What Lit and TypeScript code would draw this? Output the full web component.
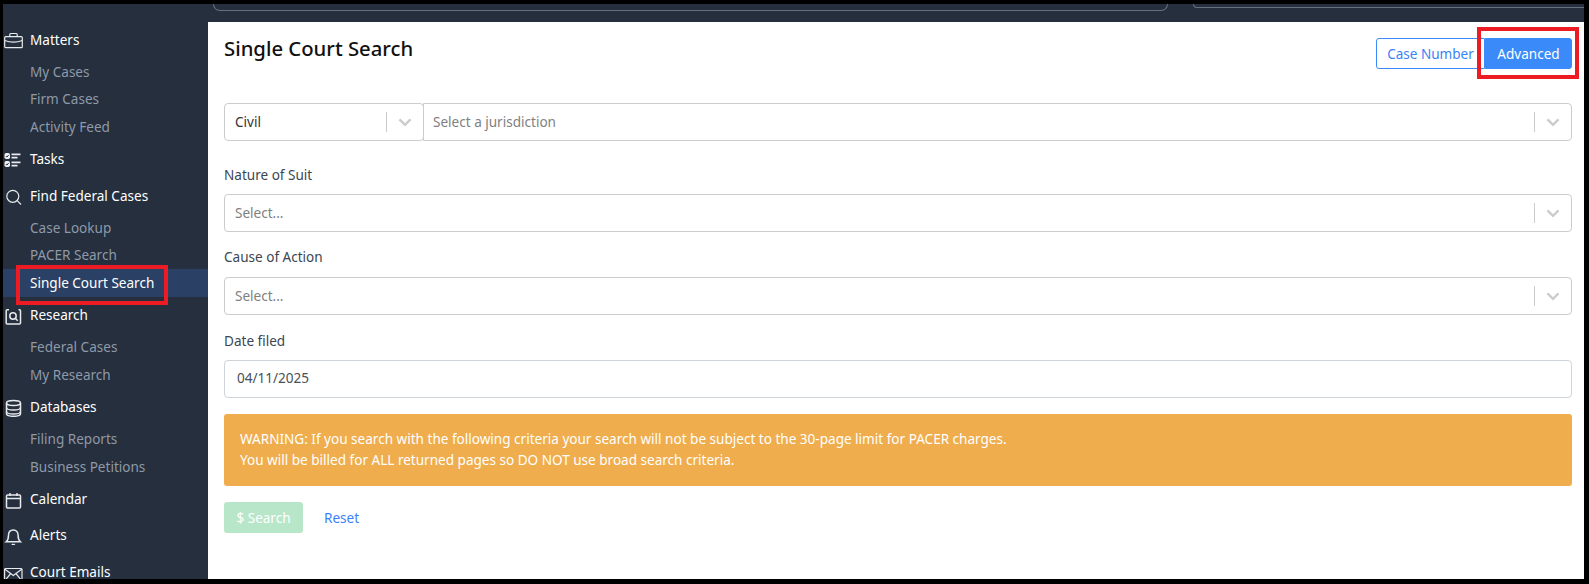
import { LitElement, html, css, svg } from "lit";
import { customElement } from "lit/decorators.js";

const icons: Record<string, unknown> = {
  matters: svg`<rect x="0.7" y="6.700" width="17.600" height="11" rx="1"/><path d="M5.800 6.700V4.500a1 1 0 0 1 1-1h5.400a1 1 0 0 1 1 1v2.200"/><path d="M.7 10.500c3 1.200 5.500 1.700 8.800 1.700s5.800-.5 8.800-1.700"/>`,
  tasks: svg`<rect class="solid" x="0.500" y="4" width="5.500" height="6" rx="1.800"/><rect class="solid" x="0.500" y="12" width="5.500" height="6" rx="1.800"/><path class="tick" d="M1.800 7l1.100 1.100 1.800-2.200M1.800 15l1.100 1.100 1.800-2.200"/><path class="bar" d="M7.500 5.300h9M7.500 8.600h6M7.500 13.300h9M7.500 16.600h6"/>`,
  search: svg`<circle cx="8.800" cy="10.300" r="6"/><path d="M13.200 14.700l3.800 3.800"/>`,
  research: svg`<path class="b" d="M5 4.700H3.200a1 1 0 0 0-1 1V18a1 1 0 0 0 1 1H15.500a1 1 0 0 0 1-1V5.700a1 1 0 0 0-1-1h-1"/><circle class="b" cx="9" cy="11" r="3.200"/><path class="b" d="M11.300 13.300l2.400 2.400"/>`,
  databases: svg`<g class="b"><ellipse cx="9.500" cy="6" rx="7" ry="2.500"/><path d="M2.500 6v10.800c0 1.500 3.100 2.500 7 2.500s7-1 7-2.500V6"/><path d="M2.500 10.500c0 1.500 3.100 2.500 7 2.500s7-1 7-2.500M2.500 14.500c0 1.500 3.100 2.500 7 2.500s7-1 7-2.500" stroke-width="1.300"/></g>`,
  calendar: svg`<rect class="b" x="2.500" y="6" width="14" height="13" rx="1"/><path class="b" d="M2.500 9.500h14"/><path class="b" d="M6 4v3M13 4v3"/>`,
  alerts: svg`<path class="b" d="M9.300 5c-3 0-4.800 2.100-4.800 5.300 0 4-1 5.400-2.300 6.500h14.200c-1.300-1.100-2.300-2.500-2.300-6.500 0-3.200-1.800-5.300-4.800-5.300z"/><path class="b" d="M7.800 19.200c.6.500 2.400.5 3 0"/>`,
  mail: svg`<rect x="0.600" y="6.500" width="17.400" height="13" rx="1"/><path d="M.6 7l8.700 6.500L18 7M.6 19l6.500-8M18 19l-6.500-8"/>`,
};

const nav = [
  { label: "Matters", icon: "matters", children: ["My Cases", "Firm Cases", "Activity Feed"] },
  { label: "Tasks", icon: "tasks", children: [] },
  { label: "Find Federal Cases", icon: "search", children: ["Case Lookup", "PACER Search", "Single Court Search"] },
  { label: "Research", icon: "research", children: ["Federal Cases", "My Research"] },
  { label: "Databases", icon: "databases", children: ["Filing Reports", "Business Petitions"] },
  { label: "Calendar", icon: "calendar", children: [] },
  { label: "Alerts", icon: "alerts", children: [] },
  { label: "Court Emails", icon: "mail", children: [] },
];

const chevron = html`<svg class="chev" viewBox="0 0 20 20"><path d="M4.500 7.300l5.500 5.500 5.500-5.500" fill="none" stroke="currentColor" stroke-width="2.400"/></svg>`;

@customElement("app-root")
export class AppRoot extends LitElement {
  static styles = css`
    :host { display: block; font-family: "Noto Sans", sans-serif; font-size: 13.560px; }
    * { box-sizing: border-box; }
    .frame { position: relative; width: 1589px; height: 584px; background: #000; padding: 4px 5px 5px 3px; display: flex; flex-direction: column; }
    .shell { flex: 1; background: #252f3e; display: flex; flex-direction: column; overflow: hidden; min-height: 0; }
    .top { height: 18px; flex: none; display: flex; padding-left: 210px; gap: 25px; }
    .pill { border: 1px solid #66717f; border-top: 0; }
    .pill.a { width: 955px; height: 7px; border-radius: 0 0 14px 14px; }
    .pill.b { flex: 1; height: 4px; border-right: 0; border-radius: 0 0 0 10px; }
    .body { flex: 1; display: flex; min-height: 0; }
    .side { width: 205px; flex: none; color: #fff; overflow: hidden; padding-top: 0; }
    .side-in { margin-top: -0.600px; }
    .head { height: 36.600px; display: flex; align-items: center; gap: 6px; padding-left: 1px; color: #fff; }
    .head svg { width: 20px; height: 20px; flex: none; fill: none; stroke: #e8eaed; stroke-width: 1.200; overflow: hidden; }
    .head svg .b { stroke-width: 1.500; }
    .head svg .solid { fill: #f1f2f4; stroke: none; }
    .head svg .tick { stroke: #252f3e; stroke-width: 1; }
    .head svg .bar { stroke-width: 1.800; }
    .sub { height: 27.600px; padding-left: 27px; display: flex; align-items: center; color: #8f99a8; }
    .sub.on { color: #fff; background: #2a4165; }
    .main { flex: 1; background: #fff; padding: 16px 12px 0 16px; color: #333; min-width: 0; }
    .title-row { display: flex; justify-content: space-between; }
    h1 { margin: -4px 0 0; font-size: 20.300px; font-weight: 500; line-height: 28px; color: #111; }
    .btns { display: flex; }
    .btn { height: 31px; display: flex; align-items: center; justify-content: center; border: 1px solid #3b8afa; color: #3b82f6; }
    .btn.l { width: 109px; border-radius: 3px 0 0 3px; }
    .btn.r { width: 87px; background: #3b8afa; color: #fff; border-radius: 0 3px 3px 0; }
    .row { display: flex; margin-top: 34px; }
    .sel { height: 38px; border: 1px solid #cccccc; border-radius: 4px; display: flex; align-items: center; padding-left: 10px; color: #808080; background: #fff; }
    .sel .txt { flex: 1; padding-bottom: 1px; }
    .sel .sep { width: 1px; height: 20px; background: #ccc; }
    .chev { width: 20px; height: 20px; color: #ccc; margin: 0 8px; flex: none; }
    .sel.type { width: 200px; flex: none; color: #333; }
    .sel.jur { flex: 1; margin-left: -1px; border-radius: 0 4px 4px 0; padding-left: 9px; }
    label { display: block; height: 20px; line-height: 19px; color: #3c4652; }
    .f1 { margin-top: 25px; }
    .f2 { margin-top: 16px; }
    .f3 { margin-top: 16.500px; }
    .f1 .sel { margin-top: 8px; }
    .f2 .sel { margin-top: 9px; }
    .inp { margin-top: 8.500px; height: 38px; border: 1px solid #ced4da; border-radius: 4px; display: flex; align-items: center; padding: 0 0 2px 12px; color: #495057; }
    .warn { margin-top: 16px; background: #efad4d; color: #fff; border-radius: 3px; padding: 15px 16px 0; height: 72px; line-height: 21px; }
    .acts { display: flex; align-items: center; margin-top: 16px; gap: 21px; }
    .go { width: 79px; height: 31px; background: #b8e6c9; color: #fff; border-radius: 3px; display: flex; align-items: center; justify-content: center; }
    .reset { color: #3b82f6; }
    .mark { position: absolute; border: 4px solid #ed1c24; pointer-events: none; }
    .m1 { left: 16px; top: 265px; width: 152px; height: 40px; }
    .m2 { left: 1477px; top: 27px; width: 102px; height: 52px; }
  `;

  render() {
    return html`<div class="frame"><div class="shell">
      <div class="top"><div class="pill a"></div><div class="pill b"></div></div>
      <div class="body">
        <nav class="side"><div class="side-in">
          ${nav.map(
            (n) => html`<div class="head">
                <svg viewBox="0 0 20 20">${icons[n.icon]}</svg><span>${n.label}</span>
              </div>
              ${n.children.map(
                (c) => html`<div class="sub ${c === "Single Court Search" ? "on" : ""}">${c}</div>`
              )}`
          )}
        </div></nav>
        <main class="main">
          <div class="title-row">
            <h1>Single Court Search</h1>
            <div class="btns"><div class="btn l">Case Number</div><div class="btn r">Advanced</div></div>
          </div>
          <div class="row">
            <div class="sel type"><span class="txt">Civil</span><span class="sep"></span>${chevron}</div>
            <div class="sel jur"><span class="txt">Select a jurisdiction</span><span class="sep"></span>${chevron}</div>
          </div>
          <div class="f1"><label>Nature of Suit</label><div class="sel"><span class="txt">Select...</span><span class="sep"></span>${chevron}</div></div>
          <div class="f2"><label>Cause of Action</label><div class="sel"><span class="txt">Select...</span><span class="sep"></span>${chevron}</div></div>
          <div class="f3"><label>Date filed</label><div class="inp">04/11/2025</div></div>
          <div class="warn">WARNING: If you search with the following criteria your search will not be subject to the 30-page limit for PACER charges.<br />You will be billed for ALL returned pages so DO NOT use broad search criteria.</div>
          <div class="acts"><div class="go">$ Search</div><div class="reset">Reset</div></div>
        </main>
      </div>
    </div>
    <div class="mark m1"></div><div class="mark m2"></div></div>`;
  }
}
